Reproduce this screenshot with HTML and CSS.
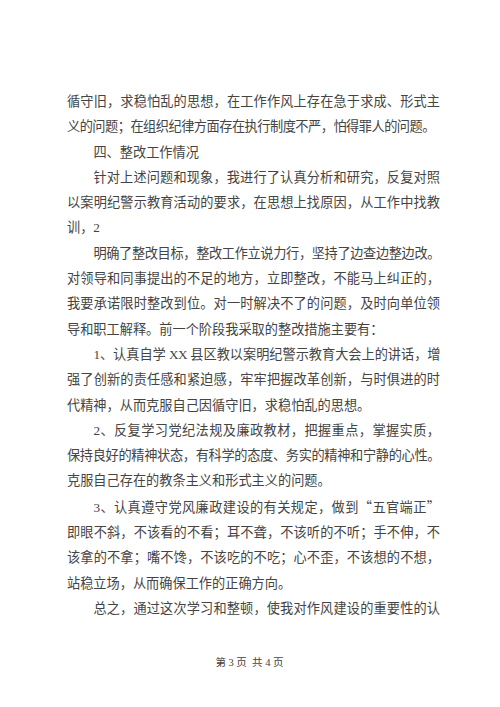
FILE: index.html
```html
<!DOCTYPE html>
<html lang="zh-CN">
<head>
    <meta charset="UTF-8">
    <meta name="viewport" content="width=device-width, initial-scale=1.0">
    <title>第3页</title>
    <link rel="stylesheet" href="styles.css">
</head>
<body>

<div class="page">
    <div class="text">
        <p>
            <span class="ln">循守旧，求稳怕乱的思想，在工作作风上存在急于求成、形式主</span>
            <span class="ln tight end">义的问题；在组织纪律方面存在执行制度不严，怕得罪人的问题。</span>
        </p>
        <p class="indent">
            <span class="ln end">四、整改工作情况</span>
        </p>
        <p class="indent">
            <span class="ln">针对上述问题和现象，我进行了认真分析和研究，反复对照</span>
            <span class="ln">以案明纪警示教育活动的要求，在思想上找原因，从工作中找教</span>
            <span class="ln end">训，2</span>
        </p>
        <p class="indent">
            <span class="ln tight">明确了整改目标，整改工作立说力行，坚持了边查边整边改。</span>
            <span class="ln">对领导和同事提出的不足的地方，立即整改，不能马上纠正的，</span>
            <span class="ln">我要承诺限时整改到位。对一时解决不了的问题，及时向单位领</span>
            <span class="ln end">导和职工解释。前一个阶段我采取的整改措施主要有：</span>
        </p>
        <p class="indent">
            <span class="ln tight">1、认真自学 XX 县区教以案明纪警示教育大会上的讲话，增</span>
            <span class="ln">强了创新的责任感和紧迫感，牢牢把握改革创新，与时俱进的时</span>
            <span class="ln end">代精神，从而克服自己因循守旧，求稳怕乱的思想。</span>
        </p>
        <p class="indent">
            <span class="ln">2、反复学习党纪法规及廉政教材，把握重点，掌握实质，</span>
            <span class="ln tight">保持良好的精神状态，有科学的态度、务实的精神和宁静的心性。</span>
            <span class="ln end">克服自己存在的教条主义和形式主义的问题。</span>
        </p>
        <p class="indent">
            <span class="ln">3、认真遵守党风廉政建设的有关规定，做到<span class="q">“五官端正”</span></span>
            <span class="ln">即眼不斜，不该看的不看；耳不聋，不该听的不听；手不伸，不</span>
            <span class="ln">该拿的不拿；嘴不馋，不该吃的不吃；心不歪，不该想的不想，</span>
            <span class="ln end">站稳立场，从而确保工作的正确方向。</span>
        </p>
        <p class="indent">
            <span class="ln">总之，通过这次学习和整顿，使我对作风建设的重要性的认</span>
        </p>
    </div>

    <div class="footer">第 3 页&nbsp; 共 4 页</div>
</div>

</body>
</html>
```

FILE: styles.css
```css
* {
    margin: 0;
    padding: 0;
    box-sizing: border-box;
}

body {
    background: #fff;
    font-family: "Liberation Serif", "Noto Sans CJK SC", serif;
    color: #444;
}

.page {
    width: 500px;
    height: 707px;
    padding: 89px 60px 0 67px;
}

.text {
    font-size: 13.2px;
    line-height: 25.3px;
}

.text p {
    display: block;
}

.ln {
    display: block;
    text-align: justify;
    text-align-last: justify;
}

.ln.end {
    text-align-last: left;
}

.ln.tight {
    letter-spacing: -0.5px;
}

.indent .ln:first-child {
    text-indent: 2em;
}

.q {
    font-family: "Noto Sans CJK SC", sans-serif;
}

.footer {
    margin-top: 35px;
    text-align: center;
    font-size: 10.5px;
    line-height: 14px;
    padding-right: 8px;
}
```
